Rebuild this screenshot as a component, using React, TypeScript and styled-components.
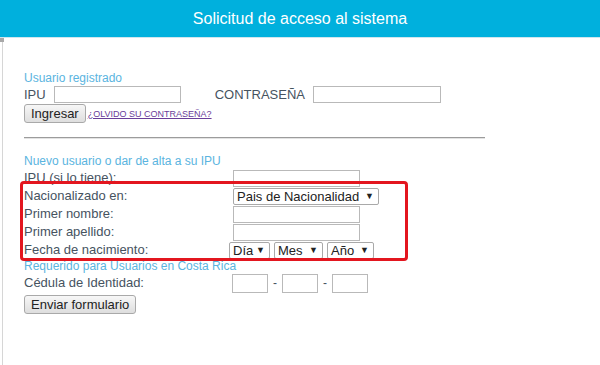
import styled, { createGlobalStyle } from "styled-components";

const GlobalStyle = createGlobalStyle`
  html, body {
    margin: 0;
    padding: 0;
    background: #ffffff;
  }
  body {
    font-family: "Liberation Sans", Arial, sans-serif;
    width: 600px;
    height: 365px;
    overflow: hidden;
  }
`;

const App = () => {
  return (
    <>
      <GlobalStyle />
      <Page>
        <Header>
          <Title>Solicitud de acceso al sistema</Title>
        </Header>
        <Body>
          <Section>
            <SectionTitle>Usuario registrado</SectionTitle>
            <LoginRow>
              <Label>IPU</Label>
              <TextInput $width={127} />
              <Label>CONTRASEÑA</Label>
              <TextInput $width={128} type="password" />
            </LoginRow>
            <ActionRow>
              <Button>Ingresar</Button>
              <ForgotLink href="#">¿OLVIDO SU CONTRASEÑA?</ForgotLink>
            </ActionRow>
          </Section>

          <Divider />

          <Section>
            <SectionTitle>Nuevo usuario o dar de alta a su IPU</SectionTitle>
            <FormGrid>
              <Label>IPU (si lo tiene):</Label>
              <TextInput $width={127} />

              <Label>Nacionalizado en:</Label>
              <Select $width={146}>
                <span>Pais de Nacionalidad</span>
                <Arrow>▼</Arrow>
              </Select>

              <Label>Primer nombre:</Label>
              <TextInput $width={127} />

              <Label>Primer apellido:</Label>
              <TextInput $width={127} />

              <Label>Fecha de nacimiento:</Label>
              <DateGroup>
                <Select $width={41}>
                  <span>Día</span>
                  <Arrow>▼</Arrow>
                </Select>
                <Select $width={49}>
                  <span>Mes</span>
                  <Arrow>▼</Arrow>
                </Select>
                <Select $width={47}>
                  <span>Año</span>
                  <Arrow>▼</Arrow>
                </Select>
              </DateGroup>
            </FormGrid>

            <SectionTitle>Requerido para Usuarios en Costa Rica</SectionTitle>
            <FormGrid>
              <Label>Cédula de Identidad:</Label>
              <CedulaGroup>
                <TextInput $width={36} $tall />
                <Dash>-</Dash>
                <TextInput $width={36} $tall />
                <Dash>-</Dash>
                <TextInput $width={36} $tall />
              </CedulaGroup>
            </FormGrid>
            <SubmitRow>
              <Button>Enviar formulario</Button>
            </SubmitRow>
          </Section>

          <Highlight />
        </Body>
      </Page>
    </>
  );
};

export default App;

const Page = styled.div`
  width: 600px;
  height: 365px;
  display: flex;
  flex-direction: column;
`;

const Header = styled.header`
  height: 37px;
  flex-shrink: 0;
  background: #00b0dd;
  border-bottom: 1px solid #cfe6ee;
  display: flex;
  align-items: center;
  justify-content: center;
`;

const Title = styled.h1`
  margin: 0;
  color: #ffffff;
  font-family: "Liberation Sans", Arial, sans-serif;
  font-weight: normal;
  font-size: 16px;
  white-space: nowrap;
`;

const Body = styled.main`
  position: relative;
  flex: 1;
  margin-left: 2px;
  border-left: 1px solid #d6d6d6;
  padding: 33px 0 0 21px;

  &::before {
    content: "";
    position: absolute;
    left: -3px;
    top: 0;
    width: 4px;
    height: 4px;
    background: #a8a8a8;
  }
`;

const Section = styled.section`
  display: flex;
  flex-direction: column;
`;

const SectionTitle = styled.div`
  color: #5ab4e0;
  font-size: 12px;
  line-height: 14px;
`;

const Label = styled.span`
  color: #46535f;
  font-size: 13px;
  line-height: 18px;
  white-space: nowrap;
`;

const LoginRow = styled.div`
  display: flex;
  align-items: center;
  gap: 8px;
  height: 19px;

  & > span:nth-of-type(2) {
    margin-left: 26px;
  }
`;

const TextInput = styled.input<{ $width: number; $tall?: boolean }>`
  box-sizing: border-box;
  width: ${(p) => p.$width}px;
  height: ${(p) => (p.$tall ? 19 : 17)}px;
  margin: 0;
  padding: 0 3px;
  border: 1px solid #b9b9b9;
  background: #ffffff;
  font-size: 12px;
  outline: none;
`;

const ActionRow = styled.div`
  display: flex;
  align-items: center;
  gap: 2px;
`;

const Button = styled.button`
  box-sizing: border-box;
  height: 19px;
  padding: 0 6px;
  margin: 0;
  font-family: "Liberation Sans", Arial, sans-serif;
  font-size: 13px;
  line-height: 17px;
  color: #222222;
  background: linear-gradient(#f7f7f7, #dedede);
  border: 1px solid #a9a9a9;
  border-radius: 3px;
`;

const ForgotLink = styled.a`
  color: #6a3d9a;
  font-size: 9px;
  text-decoration: underline;
  line-height: 12px;
`;

const Divider = styled.hr`
  width: 461px;
  margin: 14px 0 15px 0;
  border: none;
  border-top: 1px solid #9c9c9c;
  border-bottom: 1px solid #e3e3e3;
  height: 0;
`;

const FormGrid = styled.div`
  display: grid;
  grid-template-columns: 209px auto;
  grid-auto-rows: 18px;
  align-items: center;
  justify-items: start;
  margin-top: 1px;
`;

const Select = styled.div<{ $width: number }>`
  box-sizing: border-box;
  width: ${(p) => p.$width}px;
  height: 17px;
  display: flex;
  align-items: center;
  justify-content: space-between;
  padding: 0 4px 0 3px;
  background: #ffffff;
  border: 1px solid #a9a9a9;
  border-radius: 2px;
  color: #222222;
  font-size: 13px;
  line-height: 15px;
  white-space: nowrap;
`;

const Arrow = styled.span`
  font-size: 9px;
  line-height: 10px;
  color: #222222;
`;

const DateGroup = styled.div`
  display: flex;
  gap: 4px;
  margin-left: -4px;
`;

const CedulaGroup = styled.div`
  display: flex;
  align-items: center;
  margin-left: -1px;
`;

const Dash = styled.span`
  color: #46535f;
  font-size: 12px;
  width: 14px;
  text-align: center;
`;

const SubmitRow = styled.div`
  display: flex;
  margin-top: 3px;
`;

const Highlight = styled.div`
  position: absolute;
  left: 17px;
  top: 143px;
  width: 388px;
  height: 80px;
  box-sizing: border-box;
  border: 3px solid #e3161f;
  border-radius: 4px;
  pointer-events: none;
`;
